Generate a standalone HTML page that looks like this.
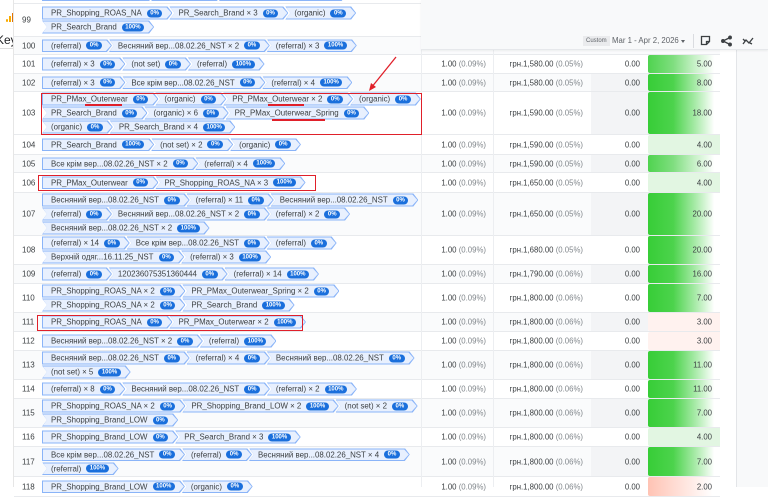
<!DOCTYPE html>
<html><head><meta charset="utf-8">
<style>
*{margin:0;padding:0;box-sizing:border-box}
body{width:768px;height:487px;overflow:hidden;background:#fff;font-family:"Liberation Sans","Noto Sans CJK SC",sans-serif;position:relative;color:#3c4043}
.row{position:absolute;left:14px;width:706px;border-bottom:1px solid #e8eaed;background:#fff}
.row.g{background:#fafbfc}
.num{position:absolute;left:8px;top:50%;transform:translateY(-50%);font-size:8px;color:#3c4043}
.paths{position:absolute;left:28px;top:50%;transform:translateY(-50%);display:flex;flex-direction:column;gap:1px}
.ln{display:flex;height:13px;white-space:nowrap}
.c{display:inline-flex;align-items:center;height:13px;padding:0 10px 0 9px;position:relative;font-size:7.9px;margin-right:-3px}
.c::before,.c::after{content:"";position:absolute;clip-path:polygon(0 0,calc(100% - 5px) 0,100% 50%,calc(100% - 5px) 100%,0 100%,5px 50%)}
.c::before{inset:0;background:#8ab4f8}
.c::after{inset:1px;background:#e8f0fe;clip-path:polygon(0 0,calc(100% - 5px) 0,100% 50%,calc(100% - 5px) 100%,0 100%,4px 50%)}
.c.f::before{clip-path:polygon(0 0,calc(100% - 5px) 0,100% 50%,calc(100% - 5px) 100%,0 100%)}
.c.f::after{clip-path:polygon(0 0,calc(100% - 5px) 0,100% 50%,calc(100% - 5px) 100%,0 100%)}
.c span{position:relative;z-index:1}
.b{position:relative;z-index:1;background:#1a6fdc;color:#fff;border-radius:5px;font-size:6px;font-weight:bold;padding:0 3.5px;height:8px;line-height:8px;margin-left:5px}
.v{position:absolute;top:50%;transform:translateY(-50%);font-size:7.8px;color:#3c4043;text-align:right;white-space:nowrap}
.v i{font-style:normal;color:#80868b}
.c3{position:absolute;left:577px;width:57px;top:0;bottom:0}
.hm{position:absolute;left:634px;width:72px;top:0;bottom:0;border-radius:2px 0 0 2px}
.s{background:linear-gradient(to right,#37cd37 0%,#4cd34c 35%,#a6eaa6 65%,#fff 92%)}
.m{background:linear-gradient(to right,#4fd34f 0%,#7fde7f 35%,#c8f1c8 65%,#fff 92%)}
.l{background:#e2f6e2}
.p{background:#fff2ef}
.r{background:linear-gradient(to right,#ffc3b4 0%,#fff 90%)}
.box{position:absolute;border:1.5px solid #e0202a}
.ul{position:absolute;height:1.5px;background:#e0202a}
</style></head><body>

<!-- left sidebar -->
<div style="position:absolute;left:0;top:0;width:14px;height:487px;background:#fff;border-right:1px solid #e6e6e6;z-index:5;overflow:hidden">
<div style="position:absolute;left:6px;top:13px;display:flex;align-items:flex-end;gap:1px">
<div style="width:2px;height:3px;background:#f9ab00;border-radius:1px"></div><div style="width:2px;height:6px;background:#f9ab00"></div><div style="width:2px;height:9px;background:#e37400"></div></div>
<div style="position:absolute;left:-4px;top:33px;font-size:12px;color:#202124">Key</div>
<div style="position:absolute;left:0;top:48px;width:14px;height:1px;background:#ddd"></div>
</div>

<!-- row 98 remnant -->
<div class="row" style="top:-14px;height:18px">
<div class="paths"><div class="ln"><span class="c f"><span>PR_Search_Brand</span><b class="b">100%</b></span><span class="c"><span>(organic)</span><b class="b">0%</b></span><span class="c"><span>12023607535136044 × 2</span><b class="b">0%</b></span></div></div></div>

<div class="row" style="top:4px;height:33px"><div class="num">99</div>
<div class="paths"><div class="ln"><span class="c f"><span>PR_Shopping_ROAS_NA</span><b class="b">0%</b></span><span class="c"><span>PR_Search_Brand × 3</span><b class="b">0%</b></span><span class="c"><span>(organic)</span><b class="b">0%</b></span></div>
<div class="ln"><span class="c"><span>PR_Search_Brand</span><b class="b">100%</b></span></div></div></div>

<div class="row g" style="top:37px;height:18px"><div class="num">100</div>
<div class="paths"><div class="ln"><span class="c f"><span>(referral)</span><b class="b">0%</b></span><span class="c"><span>Весняний вер...08.02.26_NST × 2</span><b class="b">0%</b></span><span class="c"><span>(referral) × 3</span><b class="b">100%</b></span></div></div></div>

<div class="row" style="top:55px;height:19px"><div class="num">101</div>
<div class="paths"><div class="ln"><span class="c f"><span>(referral) × 3</span><b class="b">0%</b></span><span class="c"><span>(not set)</span><b class="b">0%</b></span><span class="c"><span>(referral)</span><b class="b">100%</b></span></div></div>
<div class="v" style="right:234px">1.00 <i>(0.09%)</i></div><div class="v" style="right:137px">грн.1,580.00 <i>(0.05%)</i></div><div class="c3"></div><div class="v" style="right:80px">0.00</div><div class="hm m"></div><div class="v" style="right:8px">5.00</div></div>

<div class="row g" style="top:74px;height:18px"><div class="num">102</div>
<div class="paths"><div class="ln"><span class="c f"><span>(referral) × 3</span><b class="b">0%</b></span><span class="c"><span>Все крім вер...08.02.26_NST</span><b class="b">0%</b></span><span class="c"><span>(referral) × 4</span><b class="b">100%</b></span></div></div>
<div class="v" style="right:234px">1.00 <i>(0.09%)</i></div><div class="v" style="right:137px">грн.1,580.00 <i>(0.05%)</i></div><div class="c3" style="background:#f3f4f6"></div><div class="v" style="right:80px">0.00</div><div class="hm s"></div><div class="v" style="right:8px">8.00</div></div>

<div class="row" style="top:92px;height:43px"><div class="num">103</div>
<div class="paths"><div class="ln"><span class="c f"><span>PR_PMax_Outerwear</span><b class="b">0%</b></span><span class="c"><span>(organic)</span><b class="b">0%</b></span><span class="c"><span>PR_PMax_Outerwear × 2</span><b class="b">0%</b></span><span class="c"><span>(organic)</span><b class="b">0%</b></span></div>
<div class="ln"><span class="c"><span>PR_Search_Brand</span><b class="b">0%</b></span><span class="c"><span>(organic) × 6</span><b class="b">0%</b></span><span class="c"><span>PR_PMax_Outerwear_Spring</span><b class="b">0%</b></span></div>
<div class="ln"><span class="c"><span>(organic)</span><b class="b">0%</b></span><span class="c"><span>PR_Search_Brand × 4</span><b class="b">100%</b></span></div></div>
<div class="v" style="right:234px">1.00 <i>(0.09%)</i></div><div class="v" style="right:137px">грн.1,590.00 <i>(0.05%)</i></div><div class="c3" style="background:#f3f4f6"></div><div class="v" style="right:80px">0.00</div><div class="hm s"></div><div class="v" style="right:8px">18.00</div></div>

<div class="row" style="top:135px;height:20px"><div class="num">104</div>
<div class="paths"><div class="ln"><span class="c f"><span>PR_Search_Brand</span><b class="b">100%</b></span><span class="c"><span>(not set) × 2</span><b class="b">0%</b></span><span class="c"><span>(organic)</span><b class="b">0%</b></span></div></div>
<div class="v" style="right:234px">1.00 <i>(0.09%)</i></div><div class="v" style="right:137px">грн.1,590.00 <i>(0.05%)</i></div><div class="c3"></div><div class="v" style="right:80px">0.00</div><div class="hm l"></div><div class="v" style="right:8px">4.00</div></div>

<div class="row g" style="top:155px;height:18px"><div class="num">105</div>
<div class="paths"><div class="ln"><span class="c f"><span>Все крім вер...08.02.26_NST × 2</span><b class="b">0%</b></span><span class="c"><span>(referral) × 4</span><b class="b">100%</b></span></div></div>
<div class="v" style="right:234px">1.00 <i>(0.09%)</i></div><div class="v" style="right:137px">грн.1,590.00 <i>(0.05%)</i></div><div class="c3" style="background:#f3f4f6"></div><div class="v" style="right:80px">0.00</div><div class="hm m"></div><div class="v" style="right:8px">6.00</div></div>

<div class="row" style="top:173px;height:20px"><div class="num">106</div>
<div class="paths"><div class="ln"><span class="c f"><span>PR_PMax_Outerwear</span><b class="b">0%</b></span><span class="c"><span>PR_Shopping_ROAS_NA × 3</span><b class="b">100%</b></span></div></div>
<div class="v" style="right:234px">1.00 <i>(0.09%)</i></div><div class="v" style="right:137px">грн.1,650.00 <i>(0.05%)</i></div><div class="c3"></div><div class="v" style="right:80px">0.00</div><div class="hm l"></div><div class="v" style="right:8px">4.00</div></div>

<div class="row g" style="top:193px;height:43px"><div class="num">107</div>
<div class="paths"><div class="ln"><span class="c f"><span>Весняний вер...08.02.26_NST</span><b class="b">0%</b></span><span class="c"><span>(referral) × 11</span><b class="b">0%</b></span><span class="c"><span>Весняний вер...08.02.26_NST</span><b class="b">0%</b></span></div>
<div class="ln"><span class="c"><span>(referral)</span><b class="b">0%</b></span><span class="c"><span>Весняний вер...08.02.26_NST × 2</span><b class="b">0%</b></span><span class="c"><span>(referral) × 2</span><b class="b">0%</b></span></div>
<div class="ln"><span class="c"><span>Весняний вер...08.02.26_NST × 2</span><b class="b">100%</b></span></div></div>
<div class="v" style="right:234px">1.00 <i>(0.09%)</i></div><div class="v" style="right:137px">грн.1,650.00 <i>(0.05%)</i></div><div class="c3" style="background:#f3f4f6"></div><div class="v" style="right:80px">0.00</div><div class="hm s"></div><div class="v" style="right:8px">20.00</div></div>

<div class="row" style="top:236px;height:29px"><div class="num">108</div>
<div class="paths"><div class="ln"><span class="c f"><span>(referral) × 14</span><b class="b">0%</b></span><span class="c"><span>Все крім вер...08.02.26_NST</span><b class="b">0%</b></span><span class="c"><span>(referral)</span><b class="b">0%</b></span></div>
<div class="ln"><span class="c"><span>Верхній одяг...16.11.25_NST</span><b class="b">0%</b></span><span class="c"><span>(referral) × 3</span><b class="b">100%</b></span></div></div>
<div class="v" style="right:234px">1.00 <i>(0.09%)</i></div><div class="v" style="right:137px">грн.1,680.00 <i>(0.05%)</i></div><div class="c3"></div><div class="v" style="right:80px">0.00</div><div class="hm s"></div><div class="v" style="right:8px">20.00</div></div>

<div class="row g" style="top:265px;height:19px"><div class="num">109</div>
<div class="paths"><div class="ln"><span class="c f"><span>(referral)</span><b class="b">0%</b></span><span class="c"><span>120236075351360444</span><b class="b">0%</b></span><span class="c"><span>(referral) × 14</span><b class="b">100%</b></span></div></div>
<div class="v" style="right:234px">1.00 <i>(0.09%)</i></div><div class="v" style="right:137px">грн.1,790.00 <i>(0.06%)</i></div><div class="c3" style="background:#f3f4f6"></div><div class="v" style="right:80px">0.00</div><div class="hm s"></div><div class="v" style="right:8px">16.00</div></div>

<div class="row" style="top:284px;height:29px"><div class="num">110</div>
<div class="paths"><div class="ln"><span class="c f"><span>PR_Shopping_ROAS_NA × 2</span><b class="b">0%</b></span><span class="c"><span>PR_PMax_Outerwear_Spring × 2</span><b class="b">0%</b></span></div>
<div class="ln"><span class="c"><span>PR_Shopping_ROAS_NA × 2</span><b class="b">0%</b></span><span class="c"><span>PR_Search_Brand</span><b class="b">100%</b></span></div></div>
<div class="v" style="right:234px">1.00 <i>(0.09%)</i></div><div class="v" style="right:137px">грн.1,800.00 <i>(0.06%)</i></div><div class="c3"></div><div class="v" style="right:80px">0.00</div><div class="hm s"></div><div class="v" style="right:8px">7.00</div></div>

<div class="row g" style="top:313px;height:19px"><div class="num">111</div>
<div class="paths"><div class="ln"><span class="c f"><span>PR_Shopping_ROAS_NA</span><b class="b">0%</b></span><span class="c"><span>PR_PMax_Outerwear × 2</span><b class="b">100%</b></span></div></div>
<div class="v" style="right:234px">1.00 <i>(0.09%)</i></div><div class="v" style="right:137px">грн.1,800.00 <i>(0.06%)</i></div><div class="c3" style="background:#f3f4f6"></div><div class="v" style="right:80px">0.00</div><div class="hm p"></div><div class="v" style="right:8px">3.00</div></div>

<div class="row" style="top:332px;height:19px"><div class="num">112</div>
<div class="paths"><div class="ln"><span class="c f"><span>Весняний вер...08.02.26_NST × 2</span><b class="b">0%</b></span><span class="c"><span>(referral)</span><b class="b">100%</b></span></div></div>
<div class="v" style="right:234px">1.00 <i>(0.09%)</i></div><div class="v" style="right:137px">грн.1,800.00 <i>(0.06%)</i></div><div class="c3"></div><div class="v" style="right:80px">0.00</div><div class="hm p"></div><div class="v" style="right:8px">3.00</div></div>

<div class="row g" style="top:351px;height:29px"><div class="num">113</div>
<div class="paths"><div class="ln"><span class="c f"><span>Весняний вер...08.02.26_NST</span><b class="b">0%</b></span><span class="c"><span>(referral) × 4</span><b class="b">0%</b></span><span class="c"><span>Весняний вер...08.02.26_NST</span><b class="b">0%</b></span></div>
<div class="ln"><span class="c"><span>(not set) × 5</span><b class="b">100%</b></span></div></div>
<div class="v" style="right:234px">1.00 <i>(0.09%)</i></div><div class="v" style="right:137px">грн.1,800.00 <i>(0.06%)</i></div><div class="c3" style="background:#f3f4f6"></div><div class="v" style="right:80px">0.00</div><div class="hm s"></div><div class="v" style="right:8px">11.00</div></div>

<div class="row" style="top:380px;height:19px"><div class="num">114</div>
<div class="paths"><div class="ln"><span class="c f"><span>(referral) × 8</span><b class="b">0%</b></span><span class="c"><span>Весняний вер...08.02.26_NST</span><b class="b">0%</b></span><span class="c"><span>(referral) × 2</span><b class="b">100%</b></span></div></div>
<div class="v" style="right:234px">1.00 <i>(0.09%)</i></div><div class="v" style="right:137px">грн.1,800.00 <i>(0.06%)</i></div><div class="c3"></div><div class="v" style="right:80px">0.00</div><div class="hm s"></div><div class="v" style="right:8px">11.00</div></div>

<div class="row g" style="top:399px;height:29px"><div class="num">115</div>
<div class="paths"><div class="ln"><span class="c f"><span>PR_Shopping_ROAS_NA × 2</span><b class="b">0%</b></span><span class="c"><span>PR_Shopping_Brand_LOW × 2</span><b class="b">100%</b></span><span class="c"><span>(not set) × 2</span><b class="b">0%</b></span></div>
<div class="ln"><span class="c"><span>PR_Shopping_Brand_LOW</span><b class="b">0%</b></span></div></div>
<div class="v" style="right:234px">1.00 <i>(0.09%)</i></div><div class="v" style="right:137px">грн.1,800.00 <i>(0.06%)</i></div><div class="c3" style="background:#f3f4f6"></div><div class="v" style="right:80px">0.00</div><div class="hm s"></div><div class="v" style="right:8px">7.00</div></div>

<div class="row" style="top:428px;height:19px"><div class="num">116</div>
<div class="paths"><div class="ln"><span class="c f"><span>PR_Shopping_Brand_LOW</span><b class="b">0%</b></span><span class="c"><span>PR_Search_Brand × 3</span><b class="b">100%</b></span></div></div>
<div class="v" style="right:234px">1.00 <i>(0.09%)</i></div><div class="v" style="right:137px">грн.1,800.00 <i>(0.06%)</i></div><div class="c3"></div><div class="v" style="right:80px">0.00</div><div class="hm l"></div><div class="v" style="right:8px">4.00</div></div>

<div class="row g" style="top:447px;height:30px"><div class="num">117</div>
<div class="paths"><div class="ln"><span class="c f"><span>Все крім вер...08.02.26_NST</span><b class="b">0%</b></span><span class="c"><span>(referral)</span><b class="b">0%</b></span><span class="c"><span>Весняний вер...08.02.26_NST × 4</span><b class="b">0%</b></span></div>
<div class="ln"><span class="c"><span>(referral)</span><b class="b">100%</b></span></div></div>
<div class="v" style="right:234px">1.00 <i>(0.09%)</i></div><div class="v" style="right:137px">грн.1,800.00 <i>(0.06%)</i></div><div class="c3" style="background:#f3f4f6"></div><div class="v" style="right:80px">0.00</div><div class="hm s"></div><div class="v" style="right:8px">7.00</div></div>

<div class="row" style="top:477px;height:20px"><div class="num">118</div>
<div class="paths"><div class="ln"><span class="c f"><span>PR_Shopping_Brand_LOW</span><b class="b">100%</b></span><span class="c"><span>(organic)</span><b class="b">0%</b></span></div></div>
<div class="v" style="right:234px">1.00 <i>(0.09%)</i></div><div class="v" style="right:137px">грн.1,800.00 <i>(0.06%)</i></div><div class="c3"></div><div class="v" style="right:80px">0.00</div><div class="hm r"></div><div class="v" style="right:8px">2.00</div></div>

<!-- column dividers -->
<div style="position:absolute;left:421px;top:50px;width:1px;height:437px;background:#eceef1"></div>
<div style="position:absolute;left:493px;top:50px;width:1px;height:437px;background:#eceef1"></div>
<!-- right area -->
<div style="position:absolute;left:736px;top:0;width:32px;height:487px;background:#f8f9fa;border-left:1px solid #e3e5e8"></div>

<!-- header -->
<div style="position:absolute;left:421px;top:0;width:347px;height:50px;background:#f8f9fa;border-bottom:1px solid #e6e8eb;box-shadow:0 1px 2px rgba(0,0,0,.06)"></div>
<div style="position:absolute;left:583px;top:36px;height:10px;padding:0 3px;background:#eaebed;font-size:6px;line-height:10px;color:#5f6368">Custom</div>
<div style="position:absolute;left:612px;top:36px;font-size:7.8px;color:#5f6368;line-height:10px">Mar 1 - Apr 2, 2026</div>
<div style="position:absolute;left:681px;top:40px;border-left:2.5px solid transparent;border-right:2.5px solid transparent;border-top:3px solid #5f6368"></div>
<div style="position:absolute;left:693px;top:34px;width:1px;height:14px;background:#dadce0"></div>
<svg style="position:absolute;left:700px;top:35px" width="60" height="12" viewBox="0 0 60 12" fill="none" stroke="#3c4043" stroke-width="1.3">
<path d="M1.5 1.5h8v5l-3 3h-5z M9.5 6.5h-3v3"/>
<circle cx="30" cy="2.5" r="1.3" fill="#3c4043"/><circle cx="23" cy="6" r="1.3" fill="#3c4043"/><circle cx="30" cy="9.5" r="1.3" fill="#3c4043"/><path d="M23 6l7-3.5M23 6l7 3.5"/>
<path d="M43 9l3-4 3 3 4-5M43 4l2 2M50 8l2 1"/>
</svg>

<!-- annotations -->
<div class="box" style="left:41px;top:93px;width:381px;height:42px"></div>
<div class="box" style="left:38px;top:175px;width:278px;height:16px"></div>
<div class="box" style="left:37px;top:315px;width:266px;height:16px"></div>
<div class="ul" style="left:85px;top:104px;width:37px"></div>
<div class="ul" style="left:268px;top:104px;width:36px"></div>
<div class="ul" style="left:272px;top:119px;width:53px"></div>
<svg style="position:absolute;left:360px;top:52px" width="45" height="42"><path d="M36 5L11 36" stroke="#e0202a" stroke-width="1.3"/><path d="M9 39l2-8 5 4z" fill="#e0202a"/></svg>
</body></html>
